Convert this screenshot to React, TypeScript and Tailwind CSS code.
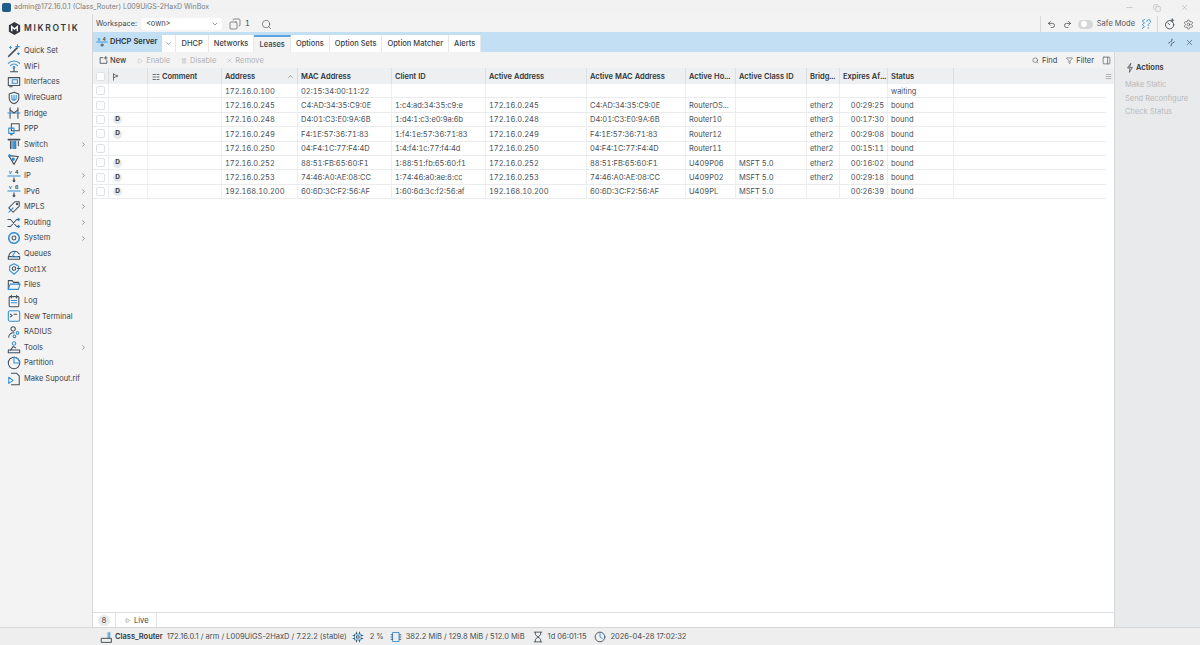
import { ChevronRight, ChevronDown, Search, Undo2, Redo2, Minus, X, Copy, Settings, Play, Pause, Filter, PanelRight, Menu, ChevronUp } from "lucide-react";
import type { ReactNode } from "react";

const D = "#44505c";
const B = "#2f8fd6";

function Ic({ children, size = 14 }: { children: ReactNode; size?: number }) {
  return (
    <svg width={size} height={size} viewBox="0 0 16 16" fill="none" strokeWidth="1.2" strokeLinecap="round" strokeLinejoin="round" className="shrink-0">
      {children}
    </svg>
  );
}

const Ipv = ({ n }: { n: string }) => (
  <Ic>
    <text x="2" y="6" fontSize="6" fontFamily="Inter" fontWeight="700" fill={B}>v</text>
    <text x="9" y="6" fontSize="6" fontFamily="Inter" fontWeight="700" fill={D}>{n}</text>
    <path d="M1 8h14" stroke={B} />
    <path d="M8 10v3" stroke={D} />
    <circle cx="8" cy="13.5" r="1" stroke={D} />
  </Ic>
);

const icons: Record<string, ReactNode> = {
  "Quick Set": <Ic><path d="M2 14L11 5" stroke={D} strokeWidth="2" /><path d="M12 1v4M10 3h4" stroke={B} /><path d="M4 3v2M3 4h2M13 10v2M12 11h2" stroke={B} /></Ic>,
  WiFi: <Ic><path d="M1.5 5a9 9 0 0 1 13 0M4 7.5a5.5 5.5 0 0 1 8 0" stroke={B} /><circle cx="8" cy="9.5" r="1" stroke={B} /><path d="M8 10.5V14M4 14.5h8" stroke={D} /></Ic>,
  Interfaces: <Ic><rect x="1.5" y="3" width="13" height="9" stroke={D} /><rect x="6" y="5.5" width="6" height="4" stroke={B} /><path d="M3 13.5h3" stroke={D} /></Ic>,
  WireGuard: <Ic><path d="M8 1.5l5.5 2V8c0 3.5-2.5 5.5-5.5 6.5C5 13.5 2.5 11.5 2.5 8V3.5z" stroke={D} /><path d="M5.5 5v3a2.5 2.5 0 0 0 5 0V5M8 5v5" stroke={B} /></Ic>,
  Bridge: <Ic><path d="M3.5 2v12M12.5 2v12" stroke={D} /><path d="M1 8h14" stroke={B} /><path d="M3.5 4.5L8 8l4.5-3.5" stroke={D} /></Ic>,
  PPP: <Ic><rect x="5" y="2" width="9" height="8" stroke={D} /><rect x="2" y="7" width="6" height="6" stroke={B} /><path d="M4 14.5h2" stroke={D} /></Ic>,
  Switch: <Ic><path d="M1.5 3h13" stroke={D} strokeWidth="1.8" /><path d="M4 5v8M7 5v8M10 5v8M13 5v5" stroke={D} /><path d="M5.5 5v8M8.5 5v8" stroke={B} /></Ic>,
  Mesh: <Ic><path d="M2 3l11 1-5 9z" stroke={D} /><circle cx="7" cy="7" r="2" fill={B} /><circle cx="3" cy="3" r="1.5" fill={B} /></Ic>,
  IP: <Ipv n="4" />,
  IPv6: <Ipv n="6" />,
  MPLS: <Ic><path d="M9 2h5v5l-7 7-5-5z" stroke={D} /><path d="M2 14l5-5" stroke={B} /><circle cx="11.5" cy="4.5" r="0.8" stroke={D} /></Ic>,
  Routing: <Ic><path d="M1 4h3l7 8h3M1 12h3l7-8h3" stroke={D} /><path d="M12.5 2.5L14.5 4l-2 1.5M12.5 10.5l2 1.5-2 1.5" stroke={B} /></Ic>,
  System: <Ic><circle cx="8" cy="8" r="6" stroke={B} strokeDasharray="3 1" strokeWidth="1.8" /><circle cx="8" cy="8" r="2.2" stroke={D} /></Ic>,
  Queues: <Ic><path d="M2 11a6.5 6.5 0 0 1 12-3" stroke={D} /><rect x="1.5" y="11" width="13" height="3" stroke={D} /><path d="M6 11l3-5M9 11h3" stroke={B} /></Ic>,
  Dot1X: <Ic><path d="M8 2l5 2.5v5L8 14 3 9.5v-5z" stroke={B} /><circle cx="8" cy="7.5" r="2" stroke={D} /><path d="M12 7.5h3" stroke={D} /></Ic>,
  Files: <Ic><path d="M1.5 13V3H6l1.5 2h6v2" stroke={D} /><path d="M1.5 13l2-6H15l-2 6z" stroke={B} /></Ic>,
  Log: <Ic><rect x="2.5" y="3" width="11" height="11.5" rx="1" stroke={D} /><path d="M5 1.5v3M11 1.5v3" stroke={D} /><path d="M5 7.5h6M5 10h6" stroke={B} /></Ic>,
  "New Terminal": <Ic><rect x="1.5" y="2" width="13" height="12" rx="2" stroke={B} /><path d="M4 6l2 1.5L4 9" stroke={D} /><path d="M8 6h3" stroke={D} /></Ic>,
  RADIUS: <Ic><circle cx="7" cy="4.5" r="2.5" stroke={D} /><path d="M2 14a5 5 0 0 1 6-5" stroke={D} /><circle cx="12" cy="9" r="1.5" stroke={B} /><circle cx="8.5" cy="13" r="1.5" stroke={B} /></Ic>,
  Tools: <Ic><path d="M1.5 14.5h13v-3h-13z" stroke={D} /><path d="M4 11.5l3-4 3 1.5" stroke={D} /><circle cx="8" cy="4" r="2" stroke={B} /></Ic>,
  Partition: <Ic><circle cx="8" cy="8" r="6.5" stroke={D} /><path d="M8 1.5V8h6.5A6.5 6.5 0 0 0 8 1.5z" stroke={B} /></Ic>,
  "Make Supout.rif": <Ic><path d="M5 1.5h6l3 3v10H5" stroke={D} /><path d="M2 6l5 3.5L2 13z" stroke={B} /></Ic>,
};

const nav: [string, boolean][] = [
  ["Quick Set", false], ["WiFi", false], ["Interfaces", false], ["WireGuard", false], ["Bridge", false], ["PPP", false],
  ["Switch", true], ["Mesh", false], ["IP", true], ["IPv6", true], ["MPLS", true], ["Routing", true], ["System", true],
  ["Queues", false], ["Dot1X", false], ["Files", false], ["Log", false], ["New Terminal", false], ["RADIUS", false],
  ["Tools", true], ["Partition", false], ["Make Supout.rif", false],
];

const tabs = ["DHCP", "Networks", "Leases", "Options", "Option Sets", "Option Matcher", "Alerts"];

// address, mac, client id, active address, active mac, host, class, bridge, expires, status, dynamic
const rows: [string, string, string, string, string, string, string, string, string, string, boolean][] = [
  ["172.16.0.100", "02:15:34:00:11:22", "", "", "", "", "", "", "", "waiting", false],
  ["172.16.0.245", "C4:AD:34:35:C9:0E", "1:c4:ad:34:35:c9:e", "172.16.0.245", "C4:AD:34:35:C9:0E", "RouterOS...", "", "ether2", "00:29:25", "bound", false],
  ["172.16.0.248", "D4:01:C3:E0:9A:6B", "1:d4:1:c3:e0:9a:6b", "172.16.0.248", "D4:01:C3:E0:9A:6B", "Router10", "", "ether3", "00:17:30", "bound", true],
  ["172.16.0.249", "F4:1E:57:36:71:83", "1:f4:1e:57:36:71:83", "172.16.0.249", "F4:1E:57:36:71:83", "Router12", "", "ether2", "00:29:08", "bound", true],
  ["172.16.0.250", "04:F4:1C:77:F4:4D", "1:4:f4:1c:77:f4:4d", "172.16.0.250", "04:F4:1C:77:F4:4D", "Router11", "", "ether2", "00:15:11", "bound", false],
  ["172.16.0.252", "88:51:FB:65:60:F1", "1:88:51:fb:65:60:f1", "172.16.0.252", "88:51:FB:65:60:F1", "U409P06", "MSFT 5.0", "ether2", "00:16:02", "bound", true],
  ["172.16.0.253", "74:46:A0:AE:08:CC", "1:74:46:a0:ae:8:cc", "172.16.0.253", "74:46:A0:AE:08:CC", "U409P02", "MSFT 5.0", "ether2", "00:29:18", "bound", true],
  ["192.168.10.200", "60:6D:3C:F2:56:AF", "1:60:6d:3c:f2:56:af", "192.168.10.200", "60:6D:3C:F2:56:AF", "U409PL", "MSFT 5.0", "", "00:26:39", "bound", true],
];

const cols = "grid grid-cols-[16px_39px_74px_76px_94px_94px_101px_99px_50px_71px_33px_48px_66px_1fr]";

function Cell({ children, right }: { children?: ReactNode; right?: boolean }) {
  return <div className={`flex items-center overflow-hidden whitespace-nowrap border-r border-[#eceef0] px-[3px] pt-[1px] ${right ? "justify-end" : ""}`}>{children}</div>;
}

function Check() {
  return <div className="h-[9px] w-[9px] rounded-[2px] border border-[#dfe2e5] bg-white" />;
}

function HeadCell({ children }: { children?: ReactNode }) {
  return <div className="flex items-center justify-between overflow-hidden whitespace-nowrap border-r border-[#dcdfe2] px-[3px] pt-[1px] font-semibold text-[#30363c]">{children}</div>;
}

export default function App() {
  return (
    <div className="flex h-[645px] w-[1200px] flex-col overflow-hidden bg-[#f3f3f3] text-[7.5px] tabular-nums text-[#3c4248] [font-family:Inter,'Liberation_Sans',sans-serif]">
      {/* window title */}
      <div className="flex h-[14px] shrink-0 items-center bg-[#f2f2f2] pt-[1px]">
        <div className="ml-[2px] h-[9px] w-[9px] rounded-[2px] bg-[#1d5c8c]" />
        <span className="ml-[3px] text-[7px] normal-nums text-[#7a7d81]">admin@172.16.0.1 (Class_Router) L009UiGS-2HaxD WinBox</span>
        <div className="ml-auto flex items-center gap-[19px] pr-[11px] text-[#8a8a8a]">
          <Minus size={9} strokeWidth={1} />
          <Copy size={8} strokeWidth={1} />
          <X size={9} strokeWidth={1} />
        </div>
      </div>

      <div className="flex min-h-0 flex-1">
        {/* sidebar */}
        <aside className="flex w-[93px] shrink-0 flex-col border-r border-[#d5d7d9] bg-[#f3f3f3]">
          <div className="mb-[1px] flex h-[28px] items-center pl-[7px]">
            <svg width="15" height="15" viewBox="0 0 16 16" className="shrink-0">
              <path d="M8 1l6 3.5v7L8 15l-6-3.5v-7z" fill="#33393f" />
              <path d="M5 11V6l3 2.5L11 6v5" stroke="#fff" strokeWidth="1.5" fill="none" />
            </svg>
            <span className="ml-[2px] text-[8.5px] font-semibold tracking-[1.7px] text-[#33393f]">MIKROTIK</span>
          </div>
          <div className="flex flex-col">
            {nav.map(([name, sub]) => (
              <div key={name} className="flex h-[15.62px] items-center pl-[7px] pr-[5px]">
                <div className="flex w-[17px] shrink-0">{icons[name]}</div>
                <span className="whitespace-nowrap">{name}</span>
                {sub && <ChevronRight size={7} strokeWidth={2} className="ml-auto text-[#555]" />}
              </div>
            ))}
          </div>
        </aside>

        <div className="flex min-w-0 flex-1 flex-col">
          {/* workspace bar */}
          <div className="flex h-[18px] shrink-0 items-center bg-[#f3f3f3] pl-[3px] pt-[2px]">
            <span className="text-[7.3px] text-[#454a50]">Workspace:</span>
            <div className="ml-[4px] flex h-[12px] w-[81px] items-center justify-between rounded-[3px] bg-white pl-[5px] pr-[3px] text-[#444]">
              <span>&lt;own&gt;</span>
              <ChevronDown size={8} className="text-[#666]" />
            </div>
            <Copy size={12} strokeWidth={1.2} className="ml-[7px] -scale-x-100 text-[#444]" />
            <span className="ml-[4px]">1</span>
            <Search size={11} strokeWidth={1.3} className="ml-[11px] text-[#444]" />
            <div className="ml-auto flex h-full items-center border-l border-[#d5d7d9] pl-[6px]">
              <Undo2 size={9} className="text-[#444]" />
              <Redo2 size={9} className="ml-[7px] text-[#444]" />
              <div className="ml-[6px] flex h-[9px] w-[15px] items-center rounded-full bg-[#d4d6d8] pl-[3px]">
                <div className="h-[6px] w-[6px] rounded-full bg-white" />
              </div>
              <span className="ml-[4px] text-[#555]">Safe Mode</span>
              <span className="ml-[5px]">
                <Ic size={12}><path d="M6 2L3 4l3 2.5L3 9l3 2.5L3 14" stroke={B} /><path d="M9 4.5a2.5 2.5 0 1 1 3.5 2.5L11 8.5V10" stroke={B} /><path d="M11 13v.5" stroke={D} /></Ic>
              </span>
              <div className="ml-[5px] flex h-full items-center gap-[7px] border-l border-[#d5d7d9] px-[6px]">
                <Ic size={12}><circle cx="7.5" cy="9" r="5.5" stroke={D} /><path d="M7.5 9L5 6.5M11 1v4M9 3h4" stroke={D} /></Ic>
                <Settings size={11} strokeWidth={1.3} className="text-[#444]" />
              </div>
            </div>
          </div>

          {/* blue tab strip */}
          <div className="flex h-[20px] shrink-0 items-stretch bg-[#c2dff3]">
            <div className="flex items-center gap-[2px] pl-[3px] pr-[5px]">
              <Ic size={12}><text x="2" y="6" fontSize="6" fontFamily="Inter" fontWeight="700" fill={B}>v</text><text x="9" y="6" fontSize="6" fontFamily="Inter" fontWeight="700" fill={D}>4</text><path d="M1 8h14" stroke={B} /><circle cx="8" cy="12" r="1.5" stroke={D} /></Ic>
              <span className="font-semibold text-[#2c3238]">DHCP Server</span>
            </div>
            <div className="mt-[3px] flex items-center border-r border-[#e6e8ea] bg-white px-[3px]"><ChevronDown size={7} strokeWidth={2} className="text-[#555]" /></div>
            {tabs.map((t) => (
              <div key={t} className={`mt-[3px] flex items-center border-r border-[#e6e8ea] px-[5px] font-medium text-[#3a4046] ${t === "Leases" ? "border-t-2 border-t-[#5aa5dd] bg-[#f3f3f3]" : "bg-white"}`}>{t}</div>
            ))}
            <div className="ml-auto flex items-center gap-[9px] pr-[6px] text-[#4b5560]">
              <Ic size={9}><path d="M3 9l3-2M13 7l-3 2M9 2L8 6M7 14l1-4" stroke={D} strokeWidth="1.6" /></Ic>
              <X size={9} strokeWidth={1.8} />
            </div>
          </div>

          <div className="flex min-h-0 flex-1">
            <div className="flex min-w-0 flex-1 flex-col">
              {/* toolbar */}
              <div className="flex h-[16px] shrink-0 items-center bg-[#f3f3f3] pl-[6px] pr-[3px] pt-[1px]">
                <Ic size={9}><path d="M7 3H2v10h12V8" stroke={D} strokeWidth="1.5" /><path d="M12 1v5M9.5 3.5h5" stroke={D} strokeWidth="1.5" /></Ic>
                <span className="ml-[2px] font-medium text-[#3c4248]">New</span>
                <Play size={6} className="ml-[11px] text-[#b5b8bb]" />
                <span className="ml-[3px] text-[#b0b3b6]">Enable</span>
                <Pause size={6} className="ml-[11px] text-[#b5b8bb]" />
                <span className="ml-[3px] text-[#b0b3b6]">Disable</span>
                <X size={7} className="ml-[10px] text-[#b5b8bb]" />
                <span className="ml-[2px] text-[#b0b3b6]">Remove</span>
                <Search size={7} strokeWidth={2} className="ml-auto text-[#555]" />
                <span className="ml-[3px]">Find</span>
                <Filter size={7} strokeWidth={2} className="ml-[9px] text-[#555]" />
                <span className="ml-[3px]">Filter</span>
                <PanelRight size={9} strokeWidth={1.8} className="ml-[8px] text-[#555]" />
              </div>

              {/* table */}
              <div className="flex min-h-0 flex-1 flex-col bg-white">
                <div className={`${cols} h-[16px] shrink-0 bg-[#eeeff0]`}>
                  <div className="flex items-center justify-center border-r border-[#dcdfe2]"><Check /></div>
                  <HeadCell>
                    <Ic size={8}><path d="M3 1.5v13" stroke="#555" strokeWidth="1.6" /><path d="M3 2.5L12 6 3 9.5" stroke="#555" strokeWidth="1.6" /></Ic>
                  </HeadCell>
                  <HeadCell>
                    <span className="flex items-center gap-[2px] pl-[1px]">
                      <Ic size={8}><path d="M2 3h5M2 8h5M2 13h5M10 3h4M10 8h4M10 13h4" stroke={D} strokeWidth="1.6" /></Ic>
                      Comment
                    </span>
                  </HeadCell>
                  <HeadCell>Address<ChevronUp size={7} strokeWidth={2} className="text-[#555]" /></HeadCell>
                  <HeadCell>MAC Address</HeadCell>
                  <HeadCell>Client ID</HeadCell>
                  <HeadCell>Active Address</HeadCell>
                  <HeadCell>Active MAC Address</HeadCell>
                  <HeadCell>Active Ho...</HeadCell>
                  <HeadCell>Active Class ID</HeadCell>
                  <HeadCell>Bridg...</HeadCell>
                  <HeadCell>Expires Af...</HeadCell>
                  <HeadCell>Status</HeadCell>
                  <div className="flex items-center justify-end pr-[2px]"><Menu size={7} className="text-[#888]" /></div>
                </div>
                <div className="flex flex-col pr-[8px]">
                  {rows.map((r) => (
                    <div key={r[0]} className={`${cols} h-[14.4px] border-b border-[#e9ebed] text-[#4a4f55]`}>
                      <div className="flex items-center justify-center border-r border-[#eceef0]"><Check /></div>
                      <Cell>
                        {r[10] && <span className="ml-[1px] flex h-[9px] w-[9px] items-center justify-center rounded-full bg-[#e7e8ea] text-[6.5px] font-bold text-[#30363c]">D</span>}
                      </Cell>
                      <Cell />
                      <Cell>{r[0]}</Cell>
                      <Cell>{r[1]}</Cell>
                      <Cell>{r[2]}</Cell>
                      <Cell>{r[3]}</Cell>
                      <Cell>{r[4]}</Cell>
                      <Cell>{r[5]}</Cell>
                      <Cell>{r[6]}</Cell>
                      <Cell>{r[7]}</Cell>
                      <Cell right>{r[8]}</Cell>
                      <Cell>{r[9]}</Cell>
                      <div />
                    </div>
                  ))}
                </div>
              </div>

              {/* table footer */}
              <div className="flex h-[15px] shrink-0 items-center border-t border-[#dcdfe2] bg-white">
                <div className="flex h-full w-[23px] items-center justify-center border-r border-[#e3e5e7] pt-[1px]">
                  <span className="rounded-full bg-[#e8e9ea] px-[4px] text-[#444]">8</span>
                </div>
                <div className="flex h-full w-[41px] items-center gap-[4px] border-r border-[#e3e5e7] pl-[9px] pt-[1px]">
                  <Play size={5} className="text-[#555]" />
                  <span>Live</span>
                </div>
              </div>
            </div>

            {/* actions panel */}
            <div className="flex w-[86px] shrink-0 flex-col border-l border-[#d5d7d9] bg-[#e9eaeb] pl-[10px]">
              <div className="flex h-[28px] items-center gap-[1px] pt-[4px]">
                <Ic size={10}><path d="M9 1L4 8h4l-1 7 5-8H8z" stroke={D} /></Ic>
                <span className="font-semibold text-[#30363c]">Actions</span>
              </div>
              <div className="flex flex-col gap-[3px] text-[#b8babc]">
                <span className="leading-[10.5px]">Make Static</span>
                <span className="leading-[10.5px]">Send Reconfigure</span>
                <span className="leading-[10.5px]">Check Status</span>
              </div>
            </div>
          </div>
        </div>
      </div>

      {/* status bar */}
      <div className="flex h-[18px] shrink-0 items-center border-t border-[#d5d7d9] bg-[#eeeeee] pl-[100px] pt-[1px] normal-nums text-[#4a4f55]">
        <Ic size={13}><path d="M10 2v7M12 2v7" stroke={B} /><rect x="2" y="9" width="12" height="5" stroke={D} /></Ic>
        <span className="ml-[2px] font-semibold text-[#30363c]">Class_Router</span>
        <span className="ml-[4px]">172.16.0.1 / arm / L009UiGS-2HaxD / 7.22.2 (stable)</span>
        <span className="ml-[5px]"><Ic size={12}><rect x="4" y="4" width="8" height="8" stroke={B} /><rect x="6.5" y="6.5" width="3" height="3" stroke={D} /><path d="M6 1.5v2M10 1.5v2M6 12.5v2M10 12.5v2M1.5 6h2M1.5 10h2M12.5 6h2M12.5 10h2" stroke={D} /></Ic></span>
        <span className="ml-[6px]">2 %</span>
        <span className="ml-[6px]"><Ic size={12}><rect x="4" y="2" width="8" height="12" stroke={B} /><path d="M1.5 5h2M1.5 8h2M1.5 11h2M12.5 5h2M12.5 8h2M12.5 11h2" stroke={D} /></Ic></span>
        <span className="ml-[4px]">382.2 MiB / 129.8 MiB / 512.0 MiB</span>
        <span className="ml-[7px]"><Ic size={12}><path d="M3 1.5h10M3 14.5h10M4.5 2v3L8 8l3.5 3v3M11.5 2v3L8 8l-3.5 3v3" stroke={D} /></Ic></span>
        <span className="ml-[4px]">1d 06:01:15</span>
        <span className="ml-[8px]"><Ic size={12}><circle cx="8" cy="8" r="6.5" stroke={D} /><path d="M8 3v5l3 2" stroke={B} /></Ic></span>
        <span className="ml-[4px]">2026-04-28 17:02:32</span>
      </div>
    </div>
  );
}
